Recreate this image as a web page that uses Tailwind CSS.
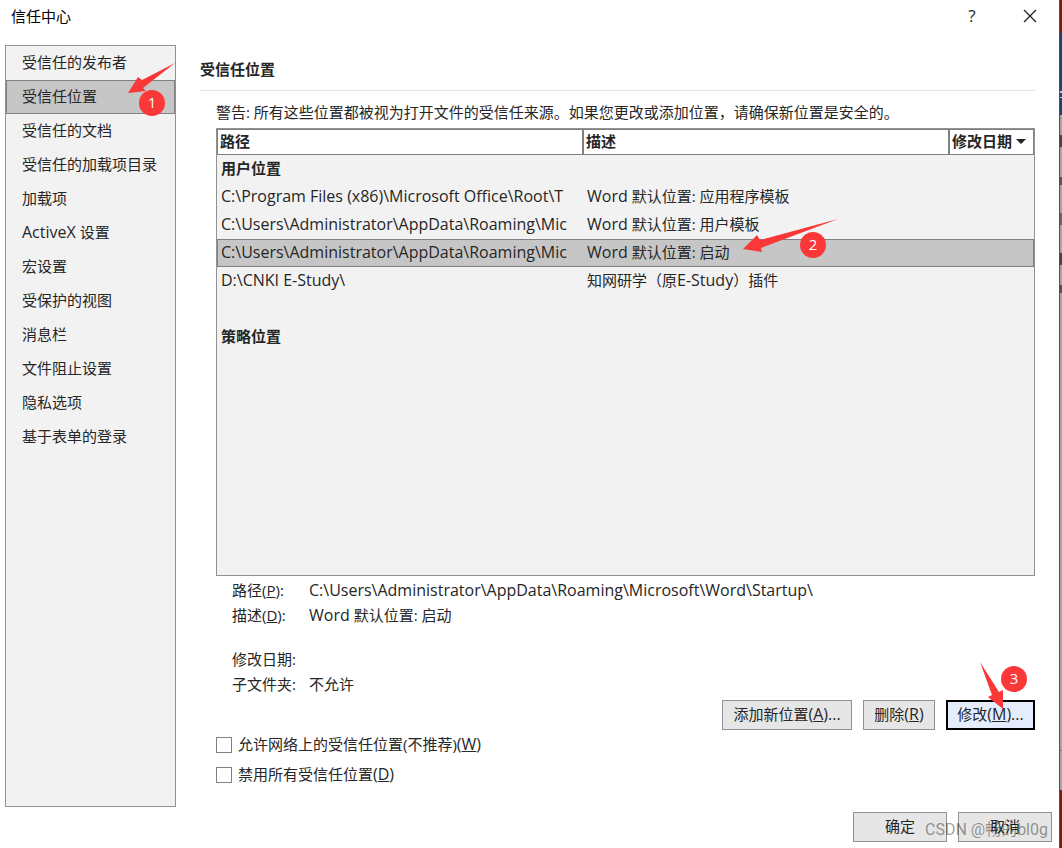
<!DOCTYPE html>
<html lang="zh-CN">
<head>
    <meta charset="UTF-8">
    <meta name="viewport" content="width=device-width, initial-scale=1.0">
    <title>信任中心</title>
    <script src="https://cdn.jsdelivr.net/npm/@tailwindcss/browser@4"></script>
</head>
<body class="bg-white font-['Open_Sans','Noto_Sans_CJK_SC',sans-serif] text-[15px] leading-5 text-[#262626]">
<div class="relative flex min-h-screen overflow-hidden">
    <!-- Dialog -->
    <div class="flex flex-1 flex-col">
        <header class="flex h-[45px] items-start justify-between pt-[6px] pr-[19px] pl-[11px]">
            <h1 class="text-black">信任中心</h1>
            <div class="flex gap-[38px]">
                <button type="button" aria-label="帮助" class="h-5 w-5 text-[17px]">?</button>
                <button type="button" aria-label="关闭" class="flex h-5 w-5 items-center justify-center">
                    <svg width="14" height="14" viewBox="0 0 14 14" fill="none" stroke="#222" stroke-width="1.3"><path d="M1 1l12 12M13 1L1 13"/></svg>
                </button>
            </div>
        </header>

        <div class="flex flex-1 pr-6 pl-[5px]">
            <!-- Categories -->
            <nav class="w-[171px] shrink-0 border border-[#929292] bg-[#f2f2f2]">
                <ul>
                    <li><a href="#" class="flex h-[34px] items-center pb-[2px] pl-4">受信任的发布者</a></li>
                    <li><a href="#" class="flex h-[34px] items-center bg-[#c6c6c6] pb-[2px] pl-4 outline -outline-offset-1 outline-[#808080]">受信任位置</a></li>
                    <li><a href="#" class="flex h-[34px] items-center pb-[2px] pl-4">受信任的文档</a></li>
                    <li><a href="#" class="flex h-[34px] items-center pb-[2px] pl-4">受信任的加载项目录</a></li>
                    <li><a href="#" class="flex h-[34px] items-center pb-[2px] pl-4">加载项</a></li>
                    <li><a href="#" class="flex h-[34px] items-center pb-[2px] pl-4"><span><span class="text-base/5">ActiveX</span> 设置</span></a></li>
                    <li><a href="#" class="flex h-[34px] items-center pb-[2px] pl-4">宏设置</a></li>
                    <li><a href="#" class="flex h-[34px] items-center pb-[2px] pl-4">受保护的视图</a></li>
                    <li><a href="#" class="flex h-[34px] items-center pb-[2px] pl-4">消息栏</a></li>
                    <li><a href="#" class="flex h-[34px] items-center pb-[2px] pl-4">文件阻止设置</a></li>
                    <li><a href="#" class="flex h-[34px] items-center pb-[2px] pl-4">隐私选项</a></li>
                    <li><a href="#" class="flex h-[34px] items-center pb-[2px] pl-4">基于表单的登录</a></li>
                </ul>
            </nav>

            <main class="ml-6 flex-1 pt-[14px]">
                <h2 class="border-b border-[#e3e3e3] pb-[11px] font-bold">受信任位置</h2>
                <div class="pt-[11px] pl-4">
                    <p>警告: 所有这些位置都被视为打开文件的受信任来源。如果您更改或添加位置，请确保新位置是安全的。</p>

                    <!-- Locations -->
                    <div class="mt-[6px] h-[448px] border border-[#929292] bg-[#f2f2f2]">
                        <table class="w-full table-fixed border-separate border-spacing-0 text-left">
                            <colgroup>
                                <col>
                                <col>
                                <col class="w-[85px]">
                            </colgroup>
                            <thead>
                                <tr class="h-[26px] bg-white">
                                    <th class="border border-[#808080] pb-[2px] pl-[2px]">路径</th>
                                    <th class="border border-[#808080] pb-[2px] pl-[2px]">描述</th>
                                    <th class="border border-[#808080] pb-[2px] pl-[2px] whitespace-nowrap">
                                        <div class="flex items-center gap-1">修改日期<svg width="10" height="5" viewBox="0 0 10 5"><path d="M0 0h10L5 5z" fill="#222"/></svg></div>
                                    </th>
                                </tr>
                            </thead>
                            <tbody>
                                <tr class="h-7"><th colspan="3" class="pb-[2px] pl-1">用户位置</th></tr>
                                <tr class="h-7">
                                    <td class="pb-[2px] pl-1 text-base/5 whitespace-nowrap">C:\Program Files (x86)\Microsoft Office\Root\T</td>
                                    <td colspan="2" class="pb-[2px] pl-1"><span class="text-base/5">Word</span> 默认位置: 应用程序模板</td>
                                </tr>
                                <tr class="h-7">
                                    <td class="pb-[2px] pl-1 text-base/5 whitespace-nowrap">C:\Users\Administrator\AppData\Roaming\Mic</td>
                                    <td colspan="2" class="pb-[2px] pl-1"><span class="text-base/5">Word</span> 默认位置: 用户模板</td>
                                </tr>
                                <tr class="h-7 bg-[#c6c6c6] outline -outline-offset-1 outline-[#808080]">
                                    <td class="pb-[2px] pl-1 text-base/5 whitespace-nowrap">C:\Users\Administrator\AppData\Roaming\Mic</td>
                                    <td colspan="2" class="pb-[2px] pl-1"><span class="text-base/5">Word</span> 默认位置: 启动</td>
                                </tr>
                                <tr class="h-7">
                                    <td class="pb-[2px] pl-1 text-base/5 whitespace-nowrap">D:\CNKI E-Study\</td>
                                    <td colspan="2" class="pb-[2px] pl-1">知网研学（原<span class="text-base/5">E-Study</span>）插件</td>
                                </tr>
                                <tr class="h-7"><td colspan="3"></td></tr>
                                <tr class="h-7"><th colspan="3" class="pb-[2px] pl-1">策略位置</th></tr>
                            </tbody>
                        </table>
                    </div>

                    <!-- Details of the selected location -->
                    <dl class="grid grid-cols-[77px_1fr] gap-y-[5px] pt-1 pl-4">
                        <dt>路径(<u>P</u>):</dt>
                        <dd class="text-base/5">C:\Users\Administrator\AppData\Roaming\Microsoft\Word\Startup\</dd>
                        <dt>描述(<u>D</u>):</dt>
                        <dd><span class="text-base/5">Word</span> 默认位置: 启动</dd>
                        <dt class="mt-[19px]">修改日期:</dt>
                        <dd class="mt-[19px]"></dd>
                        <dt>子文件夹:</dt>
                        <dd>不允许</dd>
                    </dl>

                    <div class="mt-[6px] flex justify-end gap-[11px]">
                        <button type="button" class="h-[30px] w-[130px] border border-[#929292] bg-[#e6e6e6] pb-[2px]">添加新位置<span class="text-base/5">(<u>A</u>)...</span></button>
                        <button type="button" class="h-[30px] w-[72px] border border-[#929292] bg-[#e6e6e6] pb-[2px]">删除<span class="text-base/5">(<u>R</u>)</span></button>
                        <button type="button" class="h-[30px] w-[89px] border-2 border-black bg-[#e5edfd] pb-[2px]">修改<span class="text-base/5">(<u>M</u>)...</span></button>
                    </div>

                    <div class="mt-1 flex flex-col gap-[10px]">
                        <label class="flex items-center gap-[6px]"><input type="checkbox" class="mt-[2px] h-4 w-4 appearance-none border border-[#808080] bg-white"><span>允许网络上的受信任位置(不推荐)<span class="text-base/5">(<u>W</u>)</span></span></label>
                        <label class="flex items-center gap-[6px]"><input type="checkbox" class="mt-[2px] h-4 w-4 appearance-none border border-[#808080] bg-white"><span>禁用所有受信任位置<span class="text-base/5">(<u>D</u>)</span></span></label>
                    </div>
                </div>
            </main>
        </div>

        <footer class="flex justify-end gap-[11px] pt-[5px] pr-[7px] pb-[6px]">
            <button type="button" class="h-[30px] w-[94px] border border-[#929292] bg-[#e6e6e6] pb-[2px]">确定</button>
            <button type="button" class="h-[30px] w-[94px] border border-[#929292] bg-[#e6e6e6] pb-[2px]">取消</button>
        </footer>
    </div>

    <!-- Sliver of the window behind -->
    <div class="flex w-[3px] shrink-0 flex-col border-l border-[#2b579a] bg-[#a5a5a8]">
        <div class="h-[33px] bg-[#7a1a14]"></div>
        <div class="h-[58px] bg-[#1f3f75]"></div>
        <div class="h-[2px] bg-[#c5cbd6]"></div>
        <div class="h-[4px] bg-[#1f3f75]"></div>
        <div class="h-px bg-[#c5cbd6]"></div>
        <div class="h-[17px] bg-[#1f3f75]"></div>
        <div class="mt-5 h-3 bg-[#444]"></div>
        <div class="mt-[30px] h-2 bg-[#555]"></div>
        <div class="mt-7 h-3 bg-[#666]"></div>
        <div class="mt-7 h-3 bg-[#444]"></div>
        <div class="mt-5 h-2 bg-[#555]"></div>
        <div class="flex-1"></div>
        <div class="h-px bg-[#808080]"></div>
        <div class="h-[39px]"></div>
        <div class="h-[58px] bg-[#7a1a14]"></div>
    </div>

    <!-- Numbered steps -->
    <svg class="absolute top-[62px] left-[127px]" width="50" height="34" viewBox="0 0 50 34"><path d="M48 1L15 18 11 15 1 31 19 29 16 26z" fill="#fb3838"/></svg>
    <span class="absolute top-[90px] left-[139px] h-[26px] w-[26px] rounded-full bg-[#fb3838] text-center leading-6 text-white">1</span>
    <svg class="absolute top-[218px] left-[742px]" width="98" height="36" viewBox="0 0 98 36"><path d="M96 1L18 22 15 17 1 31 20 34 19 30z" fill="#fb3838"/></svg>
    <span class="absolute top-[232px] left-[800px] h-[26px] w-[26px] rounded-full bg-[#fb3838] text-center leading-6 text-white">2</span>
    <svg class="absolute top-[661px] left-[979px]" width="26" height="48" viewBox="0 0 26 48"><path d="M1 1L20 31 24 29 24 48 9 36 13 34z" fill="#fb3838"/></svg>
    <span class="absolute top-[666px] left-[1001px] h-[26px] w-[26px] rounded-full bg-[#fb3838] text-center leading-6 text-white">3</span>

    <!-- Watermark -->
    <span class="absolute right-[14px] bottom-2 font-[Roboto,'Noto_Sans_CJK_SC',sans-serif] text-base/5 text-black/40">CSDN @畅的bl0g</span>
</div>
</body>
</html>
